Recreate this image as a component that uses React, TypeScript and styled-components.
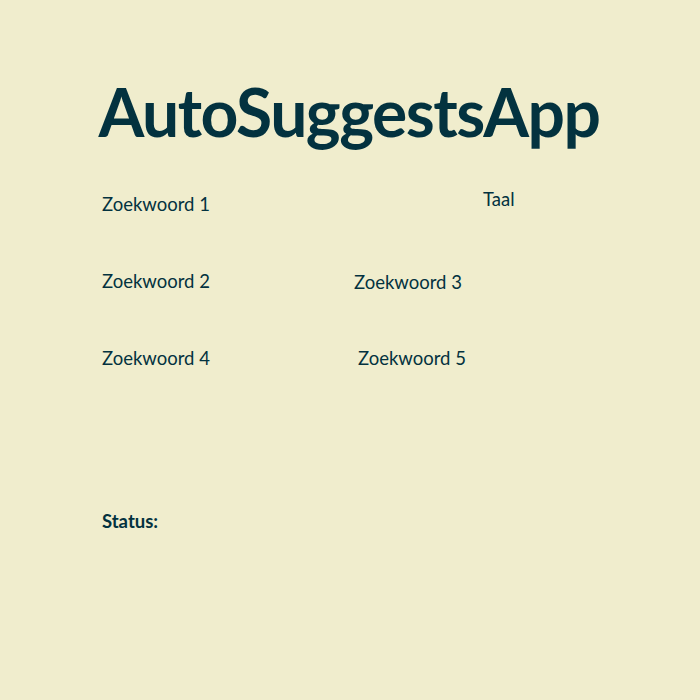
import React from "react";
import styled, { createGlobalStyle } from "styled-components";

const Global = createGlobalStyle`
  html, body { margin: 0; padding: 0; background: #f0edcd; }
  body { font-family: Lato, "Liberation Sans", sans-serif; color: #03323f; }
`;

const Page = styled.main`
  width: 700px;
  height: 700px;
  box-sizing: border-box;
  padding: 72px 100px 0 102px;
  display: flex;
  flex-direction: column;
`;

const Title = styled.h1`
  margin: 0 0 0 -4px;
  font-size: 66px;
  letter-spacing: -1.5px;
  line-height: 80px;
  font-weight: 700;
  text-align: center;
  color: #03323f;
`;

const Form = styled.div`
  margin-top: 40px;
  display: grid;
  grid-template-columns: 252px 129px 1fr;
  grid-auto-rows: 77px;
`;

const Label = styled.label<{ $dx?: number; $dy?: number }>`
  font-size: 18.5px;
  line-height: 24px;
  padding-left: ${(p) => p.$dx ?? 0}px;
  margin-top: ${(p) => p.$dy ?? 0}px;
  color: #03323f;
`;

const Empty = styled.div``;

const Status = styled.div`
  margin-top: 86px;
  font-size: 18.5px;
  font-weight: 700;
  line-height: 24px;
`;

export default function App() {
  return (
    <>
      <Global />
      <Page>
        <Title>AutoSuggestsApp</Title>
        <Form>
          <Label>Zoekwoord 1</Label>
          <Empty />
          <Label $dy={-5}>Taal</Label>
          <Label>Zoekwoord 2</Label>
          <Label $dy={1}>Zoekwoord 3</Label>
          <Empty />
          <Label>Zoekwoord 4</Label>
          <Label $dx={4}>Zoekwoord 5</Label>
          <Empty />
        </Form>
        <Status>Status:</Status>
      </Page>
    </>
  );
}
